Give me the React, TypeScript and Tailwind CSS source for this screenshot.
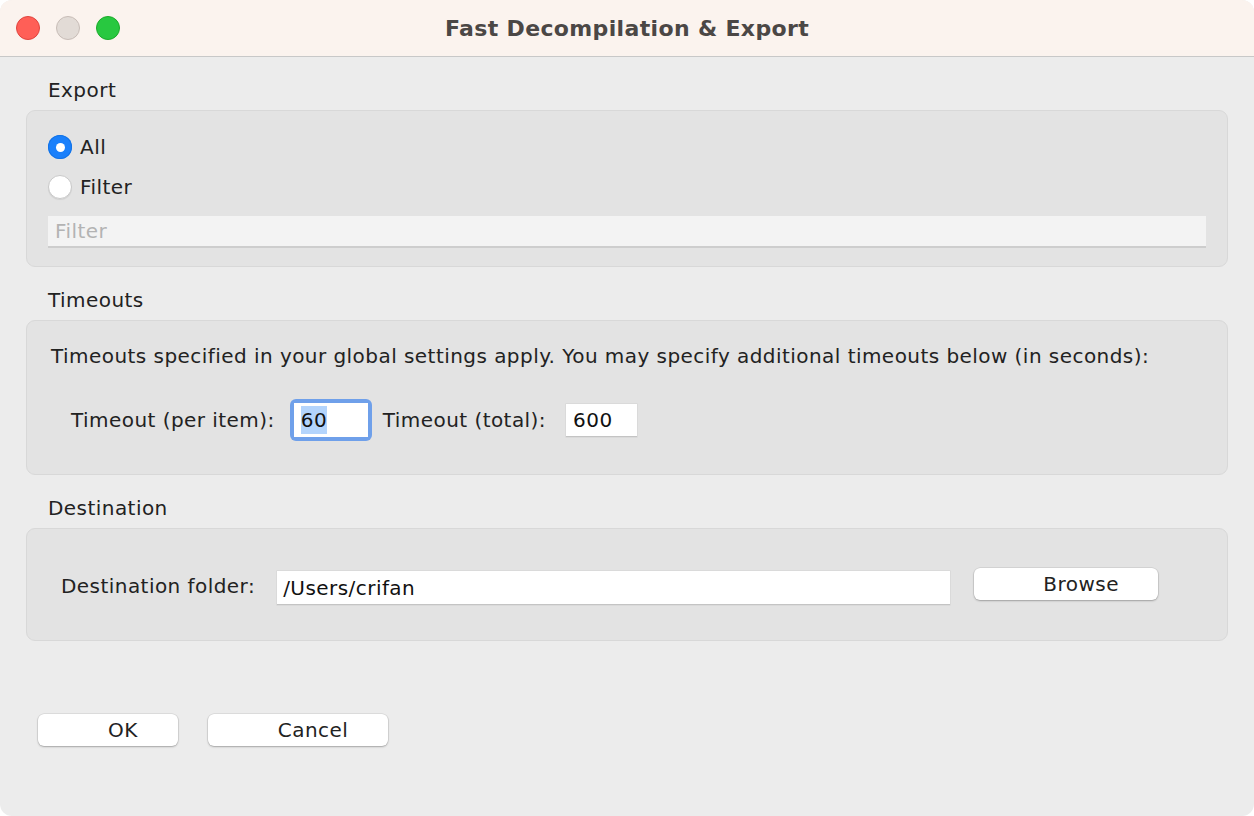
const font = { fontFamily: '"DejaVu Sans", "Liberation Sans", Arial, sans-serif' };

const Radio = ({ checked, label }: { checked: boolean; label: string }) => (
  <div className="flex h-[24px] items-center gap-[8px]">
    {checked ? (
      <div className="flex h-[24px] w-[24px] items-center justify-center rounded-full bg-[#1a80fb] shadow-[inset_0_0_0_1px_#1473e6]">
        <div className="h-[9px] w-[9px] rounded-full bg-white" />
      </div>
    ) : (
      <div className="h-[24px] w-[24px] rounded-full border border-[#c9c9c9] bg-white shadow-[0_1px_1px_rgba(0,0,0,0.08)]" />
    )}
    <span className="text-[20px] text-[#222]">{label}</span>
  </div>
);

const Button = ({ label, w }: { label: string; w: string }) => (
  <button
    className={`${w} h-[32px] rounded-[6px] bg-white pl-[30px] text-[20px] text-[#222] shadow-[0_0_0_0.5px_rgba(0,0,0,0.12),0_1px_2px_rgba(0,0,0,0.25)]`}
  >
    {label}
  </button>
);

const SectionLabel = ({ text }: { text: string }) => (
  <div className="ml-[22px] h-[24px] text-[20px] leading-[24px] text-[#222]">{text}</div>
);

export default function App() {
  return (
    <div className="h-[816px] w-[1254px] bg-white tracking-[0.45px]" style={font}>
      <div className="flex h-full w-full flex-col overflow-hidden rounded-[12px] bg-[#ececec]">
        {/* title bar */}
        <div className="relative flex h-[57px] shrink-0 items-center justify-center border-b border-[#c8c8c8] bg-[#fbf3ee]">
          <div className="absolute left-[16px] top-[16px] flex gap-[16px]">
            <div className="h-[24px] w-[24px] rounded-full border border-[#e0443e] bg-[#ff5f57]" />
            <div className="h-[24px] w-[24px] rounded-full border border-[#c8bdb7] bg-[#e2dbd6]" />
            <div className="h-[24px] w-[24px] rounded-full border border-[#1aab29] bg-[#28c840]" />
          </div>
          <span className="text-[22px] font-bold tracking-[0.35px] text-[#4b4745]">Fast Decompilation &amp; Export</span>
        </div>

        <div className="flex flex-col px-[26px] pt-[21px]">
          <SectionLabel text="Export" />
          <div className="mt-[8px] flex h-[157px] flex-col rounded-[9px] border border-[#d8d8d8] bg-[#e3e3e3] px-[21px] pt-[24px]">
            <Radio checked label="All" />
            <div className="mt-[16px]">
              <Radio checked={false} label="Filter" />
            </div>
            <div className="mt-[17px] flex h-[32px] items-center border-b-[2px] border-[#cdcdcd] bg-[#f3f3f3] px-[7px] text-[20px] text-[#b3b3b3]">
              Filter
            </div>
          </div>

          <div className="mt-[21px]">
            <SectionLabel text="Timeouts" />
          </div>
          <div className="mt-[8px] flex h-[155px] flex-col rounded-[9px] border border-[#d8d8d8] bg-[#e3e3e3] pl-[24px] pt-[23px]">
            <div className="text-[20px] leading-[24px] text-[#222]">
              Timeouts specified in your global settings apply. You may specify additional timeouts below (in seconds):
            </div>
            <div className="mt-[31px] flex items-center pl-[20px]">
              <span className="text-[20px] text-[#222]">Timeout (per item):</span>
              <div className="ml-[15px] rounded-[6px] bg-[#6fa0ea] p-[4px]">
                <div className="flex h-[34px] w-[74px] items-center bg-white pl-[7px]">
                  <span className="bg-[#b3d4fc] text-[20px] leading-[28px] text-[#111]">60</span>
                </div>
              </div>
              <span className="ml-[11px] text-[20px] text-[#222]">Timeout (total):</span>
              <div className="ml-[20px] flex h-[33px] w-[71px] items-center border-b border-[#c4c4c4] bg-white pl-[7px] text-[20px] text-[#111] shadow-[0_0_0_0.5px_rgba(0,0,0,0.08)]">
                600
              </div>
            </div>
          </div>

          <div className="mt-[21px]">
            <SectionLabel text="Destination" />
          </div>
          <div className="mt-[8px] flex h-[113px] items-start rounded-[9px] border border-[#d8d8d8] bg-[#e3e3e3] pl-[34px]">
            <span className="mt-[45px] text-[20px] leading-[24px] text-[#222]">Destination folder:</span>
            <div className="ml-[22px] mt-[42px] flex h-[34px] w-[673px] items-center border-b border-[#c4c4c4] bg-white pl-[6px] text-[20px] text-[#111] shadow-[0_0_0_0.5px_rgba(0,0,0,0.08)]">
              /Users/crifan
            </div>
            <div className="ml-[24px] mt-[39px]">
              <Button label="Browse" w="w-[184px]" />
            </div>
          </div>

          <div className="ml-[12px] mt-[73px] flex gap-[30px]">
            <Button label="OK" w="w-[140px]" />
            <Button label="Cancel" w="w-[180px]" />
          </div>
        </div>
      </div>
    </div>
  );
}
